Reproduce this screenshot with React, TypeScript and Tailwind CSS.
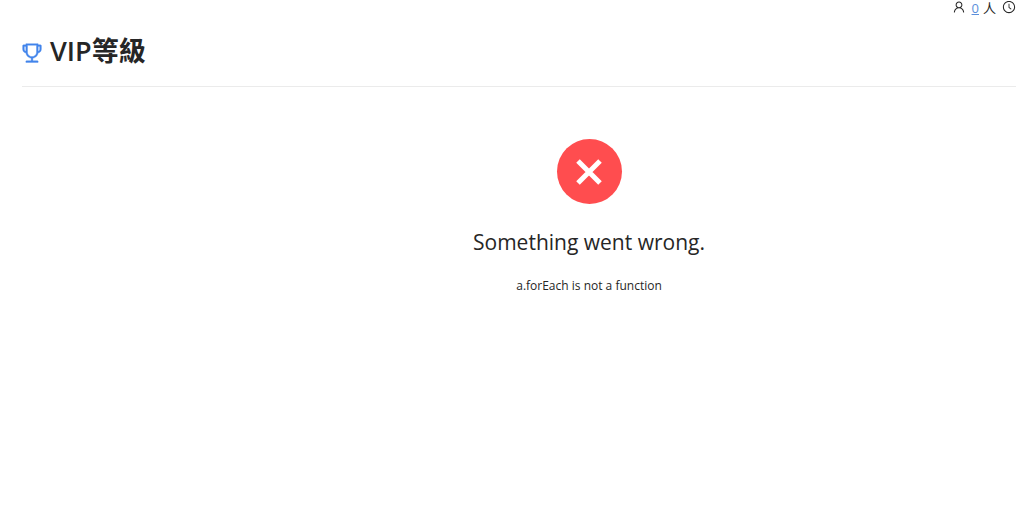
import React from "react";
import { AiOutlineClockCircle, AiOutlineTrophy, AiOutlineUser } from "react-icons/ai";

function StatusBar() {
  return (
    <div className="flex items-start justify-end text-sm leading-4">
      <AiOutlineUser className="mr-1.5" aria-hidden="true" />
      <a href="#members" className="mr-1 text-[13px] leading-4 text-[#5b8fdb] underline">
        0
      </a>
      <span className="mr-1.5 text-[13px] leading-4">人</span>
      <AiOutlineClockCircle aria-hidden="true" />
    </div>
  );
}

function ErrorResult({ title, message }: { title: string; message: string }) {
  return (
    <section role="alert" className="flex flex-col items-center pt-[52px] pl-[140px] text-center">
      <div className="flex size-[65px] items-center justify-center rounded-full bg-[#ff4d4f]">
        <svg viewBox="0 0 28 28" className="size-7" aria-hidden="true">
          <path d="M3 3 25 25M25 3 3 25" stroke="white" strokeWidth="5" fill="none" />
        </svg>
      </div>
      <h2 className="mt-5 text-[21px] leading-9">{title}</h2>
      <p className="mt-4 text-xs leading-5">{message}</p>
    </section>
  );
}

export default function App() {
  return (
    <div className="bg-white font-['Open_Sans','Noto_Sans_CJK_TC',sans-serif] text-[#262626]">
      <StatusBar />
      <main className="pl-[22px]">
        <header className="flex items-center gap-1.5 border-b border-[#ebebeb] pt-4 pb-4">
          <AiOutlineTrophy className="-ml-0.5 mt-1 size-6 text-[#4285ec]" strokeWidth={15} aria-hidden="true" />
          <h1 className="text-[27px] leading-[38px] font-semibold">VIP等級</h1>
        </header>
        <ErrorResult title="Something went wrong." message="a.forEach is not a function" />
      </main>
    </div>
  );
}
